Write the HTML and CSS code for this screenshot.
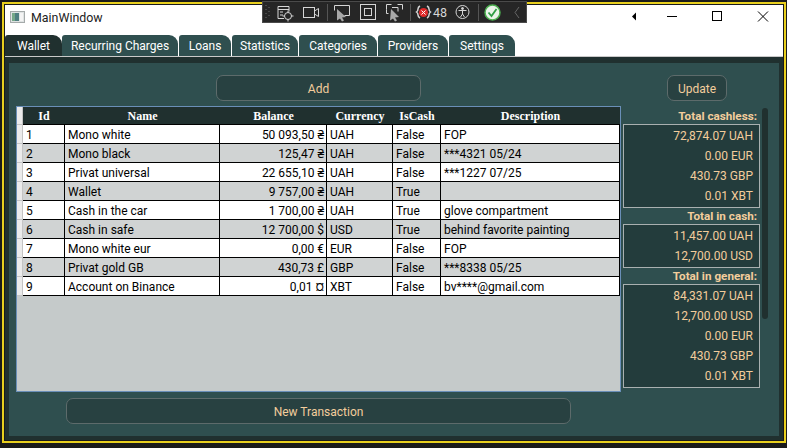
FILE: index.html
```html
<!DOCTYPE html>
<html lang="en">
<head>
  <meta charset="UTF-8">
  <title>MainWindow</title>
  <link rel="stylesheet" href="styles.css">
</head>
<body>

  <div class="window">
    <div class="titlebar">
      <svg class="app-icon" width="15" height="12" viewBox="0 0 15 12">
        <rect x="0.5" y="0.5" width="14" height="11" fill="#dfe3e3" stroke="#a5aaaa"/>
        <rect x="2" y="2" width="7" height="8" fill="#4f7f80"/>
        <rect x="2" y="2" width="3" height="8" fill="#76a889"/>
        <rect x="10" y="2" width="3" height="8" fill="#f4f4f4"/>
      </svg>
      <span class="title">MainWindow</span>
      <div class="win-controls">
        <svg width="150" height="14" viewBox="0 0 150 14">
          <path d="M0 6.500 L4 2.500 V10.500 Z" fill="#000"/>
          <path d="M35 6.500 H45" stroke="#000" fill="none"/>
          <rect x="80.500" y="1.500" width="9" height="9" stroke="#000" fill="none"/>
          <path d="M126 1.500 L136 11.500 M136 1.500 L126 11.500" stroke="#000" fill="none"/>
        </svg>
      </div>
    </div>

    <div class="tabs">
      <div class="tab active w-wallet">Wallet</div>
      <div class="tab w-recurring">Recurring Charges</div>
      <div class="tab w-loans">Loans</div>
      <div class="tab w-statistics">Statistics</div>
      <div class="tab w-categories">Categories</div>
      <div class="tab w-providers">Providers</div>
      <div class="tab w-settings">Settings</div>
    </div>

    <div class="frame">
      <div class="panel">
        <div class="left">
          <button class="btn btn-add">Add</button>
          <div class="grid-wrap">
            <table class="grid">
              <colgroup>
                <col class="c-strip"><col class="c-id"><col class="c-name"><col class="c-balance">
                <col class="c-currency"><col class="c-iscash"><col class="c-desc">
              </colgroup>
              <thead>
                <tr>
                  <th class="strip"></th>
                  <th>Id</th>
                  <th>Name</th>
                  <th>Balance</th>
                  <th>Currency</th>
                  <th>IsCash</th>
                  <th>Description</th>
                </tr>
              </thead>
              <tbody>
                <tr><td class="strip"></td><td>1</td><td>Mono white</td><td class="num">50 093,50 ₴</td><td>UAH</td><td>False</td><td>FOP</td></tr>
                <tr class="alt"><td class="strip"></td><td>2</td><td>Mono black</td><td class="num">125,47 ₴</td><td>UAH</td><td>False</td><td>***4321 05/24</td></tr>
                <tr><td class="strip"></td><td>3</td><td>Privat universal</td><td class="num">22 655,10 ₴</td><td>UAH</td><td>False</td><td>***1227 07/25</td></tr>
                <tr class="alt"><td class="strip"></td><td>4</td><td>Wallet</td><td class="num">9 757,00 ₴</td><td>UAH</td><td>True</td><td></td></tr>
                <tr><td class="strip"></td><td>5</td><td>Cash in the car</td><td class="num">1 700,00 ₴</td><td>UAH</td><td>True</td><td>glove compartment</td></tr>
                <tr class="alt"><td class="strip"></td><td>6</td><td>Cash in safe</td><td class="num">12 700,00 $</td><td>USD</td><td>True</td><td>behind favorite painting</td></tr>
                <tr><td class="strip"></td><td>7</td><td>Mono white eur</td><td class="num">0,00 €</td><td>EUR</td><td>False</td><td>FOP</td></tr>
                <tr class="alt"><td class="strip"></td><td>8</td><td>Privat gold GB</td><td class="num">430,73 £</td><td>GBP</td><td>False</td><td>***8338 05/25</td></tr>
                <tr><td class="strip"></td><td>9</td><td>Account on Binance</td><td class="num">0,01 ¤</td><td>XBT</td><td>False</td><td>bv****@gmail.com</td></tr>
              </tbody>
            </table>
          </div>
          <button class="btn btn-new">New Transaction</button>
        </div>

        <div class="right">
          <button class="btn btn-update">Update</button>
          <div class="total-label first">Total cashless:</div>
          <div class="total-box">
            <div>72,874.07 UAH</div>
            <div>0.00 EUR</div>
            <div>430.73 GBP</div>
            <div>0.01 XBT</div>
          </div>
          <div class="total-label">Total in cash:</div>
          <div class="total-box">
            <div>11,457.00 UAH</div>
            <div>12,700.00 USD</div>
          </div>
          <div class="total-label">Total in general:</div>
          <div class="total-box">
            <div>84,331.07 UAH</div>
            <div>12,700.00 USD</div>
            <div>0.00 EUR</div>
            <div>430.73 GBP</div>
            <div>0.01 XBT</div>
          </div>
        </div>

        <div class="scrollbar"></div>
      </div>
    </div>
  </div>

  <!-- debug toolbar lies over the title bar -->
  <div class="debug-bar">
    <svg width="265" height="22" viewBox="0 0 265 22" fill="none" stroke="#d6d6d6">
      <path d="M4 4v1M7 6v1M4 8v1M7 10v1M4 12v1M7 14v1M4 16v1" stroke="#6a6a6a"/>
      <path d="M16 5.500h11v5M16 5.500v12h6M16 8.500h11M18 11h3M18 14h3"/>
      <circle cx="26" cy="15" r="3.500"/>
      <path d="M26 9.500v2M26 18.500v2M20.500 15h2M29.500 15h2"/>
      <rect x="41.500" y="6.500" width="11" height="10"/>
      <path d="M52.500 10l4-2.500v8l-4-2.500"/>
      <path d="M65.500 3v17" stroke="#555"/>
      <path d="M72.500 9.500v-5h15v10h-5"/>
      <path d="M75 8l9 8-4 .500 2 3-2 1-2-3-3 2z" fill="#a8a8a8" stroke="none"/>
      <rect x="98.500" y="3.500" width="15" height="15"/>
      <rect x="102.500" y="7.500" width="7" height="7"/>
      <path d="M124.500 8.500v-5h5M135.500 3.500h5v5M130 6.500h6v4M124.500 8.500v4h2"/>
      <path d="M129 8l8 8-4 .500 2 3-2 1-2-3-3 2z" fill="#a8a8a8" stroke="none"/>
      <path d="M148.500 3v17" stroke="#555"/>
      <path d="M158 5q-2 1-2 3t-1.500 3q1.500 1 1.500 3t2 3M165 5q2 1 2 3t1.500 3q-1.500 1-1.500 3t-2 3" stroke-width="1.500"/>
      <circle cx="161.500" cy="11.500" r="4.500" fill="#e02b2b" stroke="none"/>
      <path d="M159.500 9.500l4 4M163.500 9.500l-4 4" stroke="#fff"/>
      <circle cx="200.500" cy="11" r="6.500"/>
      <circle cx="200.500" cy="7.500" r="1" fill="#d6d6d6"/>
      <path d="M196.500 9.500h8M200.500 9.500v3.500l-2 3M200.500 13l2 3"/>
      <path d="M216.500 3v17" stroke="#555"/>
      <circle cx="230.500" cy="11.500" r="7.500" fill="#eaf5ea" stroke="#4caf50" stroke-width="1.500"/>
      <path d="M226.500 11.500l3 3.500 5-7" stroke="#2f9e44" stroke-width="1.800"/>
      <path d="M257 6l-4 5.500 4 5.500" stroke="#666"/>
    </svg>
    <span class="debug-count">48</span>
  </div>

</body>
</html>
```

FILE: styles.css
```css
* {
  box-sizing: border-box;
}

html, body {
  margin: 0;
  height: 100%;
  overflow: hidden;
}

body {
  background: #1a1a1a;
  font-family: Roboto, "Noto Sans", "DejaVu Sans", sans-serif;
  font-size: 12px;
  color: #000;
}

.window {
  margin: 2px 0 0 2px;
  width: 784px;
  height: 441px;
  border: 2px solid #e8cf1e;
  background: #fff;
  display: flex;
  flex-direction: column;
  outline: 1px solid #1a1a1a;
  outline-offset: -3px;
  padding: 1px;
}

.titlebar {
  height: 30px;
  flex: none;
  display: flex;
  align-items: center;
  padding: 0 0 6px 5px;
  background: #fff;
}

.app-icon {
  margin-right: 6px;
}

.title {
  font-size: 12.400px;
  color: #222;
}

.win-controls {
  margin-left: auto;
  margin-right: 1px;
  display: flex;
}

.tabs {
  height: 22px;
  flex: none;
  display: flex;
  background: #fff;
  border-bottom: 1px solid #c9c9c9;
}

.tab {
  height: 21px;
  margin-right: 1px;
  background: #2f4f4f;
  color: #fff;
  border-radius: 3px 9px 0 0;
  display: flex;
  align-items: center;
  justify-content: center;
  font-size: 12px;
}

.tab.active {
  background: #20302f;
  margin-right: 0;
}

.w-wallet { width: 57px; }
.w-recurring { width: 116px; }
.w-loans { width: 52px; }
.w-statistics { width: 66px; }
.w-categories { width: 78px; }
.w-providers { width: 70px; }
.w-settings { width: 66px; }

.frame {
  flex: 1;
  background: #20302f;
  padding: 6px 4px 4px 4px;
  display: flex;
}

.panel {
  flex: 1;
  background: #2f4f4f;
  padding: 12px 0 0 7px;
  display: flex;
  align-items: flex-start;
}

.left {
  width: 605px;
  flex: none;
  display: flex;
  flex-direction: column;
  align-items: center;
}

.btn {
  height: 26px;
  background: #284141;
  border: 1px solid #5d6b6b;
  border-radius: 7px;
  color: #f3cd9c;
  font-family: inherit;
  font-size: 12px;
  padding: 1px 0 0;
}

.btn-add {
  width: 205px;
  margin-bottom: 5px;
}

.btn-new {
  width: 505px;
  margin-top: 6px;
}

.btn-update {
  width: 60px;
  margin-left: 44px;
  margin-bottom: 5px;
  display: block;
}

.grid-wrap {
  width: 605px;
  height: 286px;
  border: 1px solid #6a8fb8;
  background: #c5caca;
}

.grid {
  width: 603px;
  table-layout: fixed;
  border-collapse: separate;
  border-spacing: 0;
}

.c-strip { width: 6px; }
.c-id { width: 42px; }
.c-name { width: 155px; }
.c-balance { width: 107px; }
.c-currency { width: 66px; }
.c-iscash { width: 48px; }
.c-desc { width: 179px; }

.grid th {
  height: 18px;
  padding: 1px 0 0;
  background: #20302f;
  color: #fff;
  font-family: "Liberation Serif", serif;
  font-size: 12px;
  font-weight: bold;
  text-align: center;
  border-bottom: 1px solid #000;
}

.grid td {
  height: 19px;
  padding: 1px 3px 0;
  background: #fff;
  color: #000;
  font-size: 12px;
  white-space: nowrap;
  overflow: hidden;
  border-right: 1px solid #000;
  border-bottom: 1px solid #000;
}

.grid tr.alt td {
  background: #d0d3d3;
}

.grid th.strip,
.grid td.strip,
.grid tr.alt td.strip {
  background: #ebebeb;
  padding: 0;
  border-right: 1px solid #c4c4c4;
  border-bottom: 1px solid #c4c4c4;
}

.grid td.num {
  text-align: right;
  padding-right: 2px;
}

.right {
  width: 137px;
  margin-left: 2px;
  flex: none;
}

.total-label {
  height: 16px;
  line-height: 16px;
  text-align: right;
  padding-right: 3px;
  color: #f3cd9c;
  font-weight: bold;
  font-size: 11.700px;
}

.total-label.first {
  height: 18px;
  line-height: 20px;
}

.total-box {
  background: #233c3c;
  border: 1px solid #a9b0b0;
  padding: 1px 0;
  color: #f3cd9c;
  text-align: right;
}

.total-box div {
  height: 20px;
  line-height: 20px;
  padding-right: 6px;
}

.scrollbar {
  width: 6px;
  height: 211px;
  margin: 33px 0 0 2px;
  background: #20302f;
  border-radius: 3px;
}

.debug-bar {
  position: absolute;
  left: 262px;
  top: 1px;
  width: 265px;
  height: 22px;
  background: #262626;
  border: 1px solid #4a4a4a;
}

.debug-bar svg {
  position: absolute;
  left: -1px;
  top: -1px;
}

.debug-count {
  position: absolute;
  left: 170px;
  top: 3px;
  font-size: 12.500px;
  color: #d6d6d6;
}
```
